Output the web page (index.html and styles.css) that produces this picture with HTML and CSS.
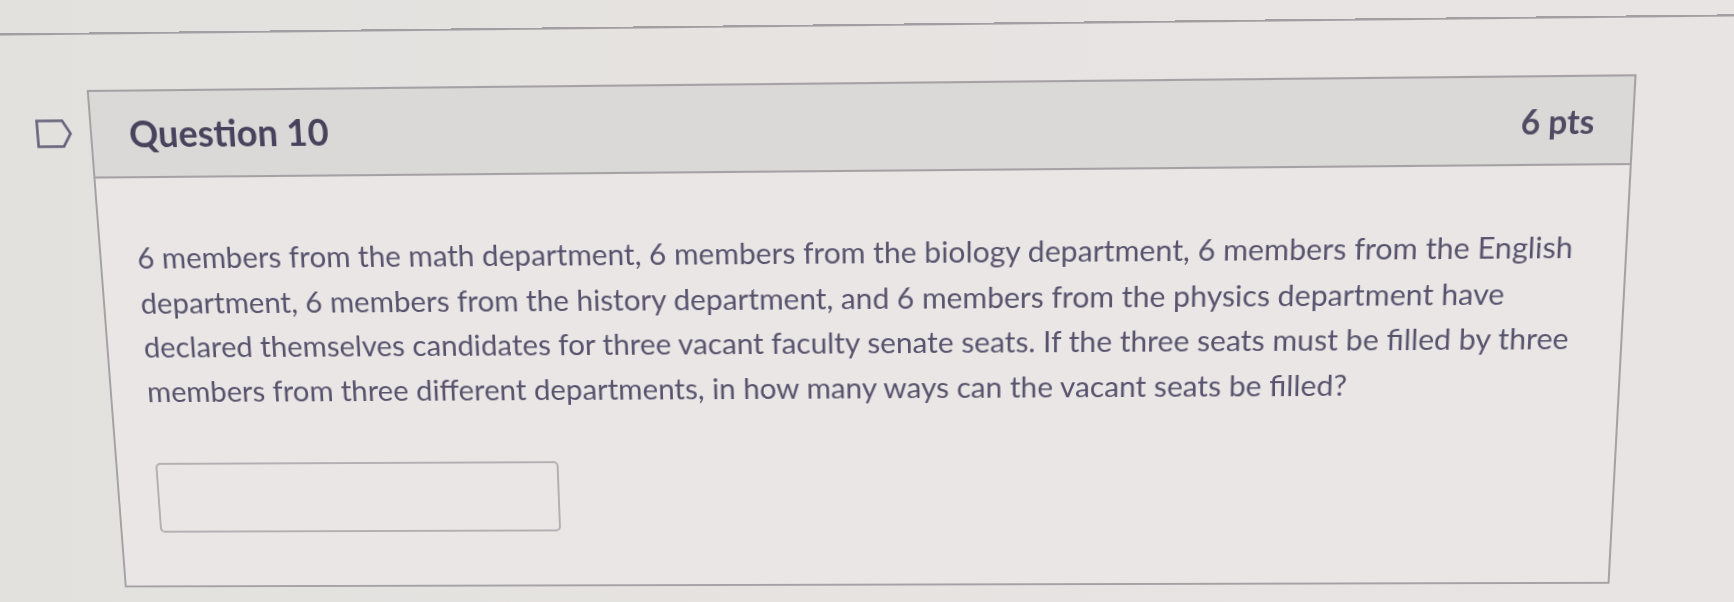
FILE: index.html
```html
<!DOCTYPE html>
<html lang="en">
<head>
<meta charset="utf-8">
<title>Question 10</title>
<link rel="stylesheet" href="styles.css">
</head>
<body>
<div class="screen">
  <div class="rule"></div>
  <div class="question-row">
    <svg class="flag" viewBox="0 0 36 28" aria-hidden="true">
      <path d="M1.5 1.5 H27 L34.5 14 L27 26.5 H1.5 Z" fill="none" stroke="#66637a" stroke-width="2.6" stroke-linejoin="miter"/>
    </svg>
    <section class="card">
      <header class="card-header">
        <h2 class="q-name">Question 10</h2>
        <span class="q-points">6 pts</span>
      </header>
      <div class="card-body">
        <p class="q-text">6 members from the math department, 6 members from the biology department, 6 members from the English department, 6 members from the history department, and 6 members from the physics department have declared themselves candidates for three vacant faculty senate seats. If the three seats must be filled by three members from three different departments, in how many ways can the vacant seats be filled?</p>
        <input class="answer" type="text" aria-label="Answer">
      </div>
    </section>
  </div>
</div>
</body>
</html>
```
FILE: styles.css
```css
html, body {
  margin: 0;
  padding: 0;
  height: 100%;
}
body {
  background: linear-gradient(90deg, #e2e1de 0%, #e6e3e1 45%, #e9e4e4 100%);
  font-family: Lato, "Noto Sans", "Liberation Sans", sans-serif;
  overflow: hidden;
}
.screen {
  width: 1734px;
  height: 602px;
  transform-origin: 0 0;
  transform: matrix3d(0.998490, -0.011112, 0, -0.000015505, 0.08704, 1.040938, 0, 0.000086924, 0, 0, 1, 0, -18.160, 4.6724, 0, 0.994249);
}
.rule {
  height: 2px;
  margin-top: 29px;
  background: #a29ea1;
}
.question-row {
  display: flex;
  align-items: flex-start;
  margin-top: 53px;
  padding-left: 46px;
}
.flag {
  flex: none;
  width: 36px;
  height: 28px;
  margin-top: 28px;
  margin-right: 18px;
}
.card {
  flex: none;
  width: 1510px;
  height: 500px;
  box-sizing: border-box;
  border: 2px solid #a6a1a5;
  background: #e9e6e5;
  display: flex;
  flex-direction: column;
}
.card-header {
  flex: none;
  height: 84px;
  box-sizing: border-box;
  border-bottom: 2px solid #a6a1a5;
  background: #dbd8d8;
  display: flex;
  justify-content: space-between;
  align-items: flex-start;
  padding: 0 36px 0 37px;
  color: #48435c;
}
.q-name {
  margin: 18px 0 0;
  font-size: 36px;
  line-height: 44px;
  font-weight: 700;
}
.q-points {
  margin-top: 23px;
  font-size: 32px;
  line-height: 38px;
  font-weight: 700;
  color: #504b63;
}
.card-body {
  padding: 56px 20px 0 36px;
}
.q-text {
  margin: 0;
  max-width: 1440px;
  font-size: 29.7px;
  line-height: 44.7px;
  color: #58536d;
}
.answer {
  display: block;
  margin: 50px 0 0 3px;
  width: 412px;
  height: 72px;
  box-sizing: border-box;
  border: 2px solid #b4afb2;
  border-radius: 5px;
  background: transparent;
}
```
